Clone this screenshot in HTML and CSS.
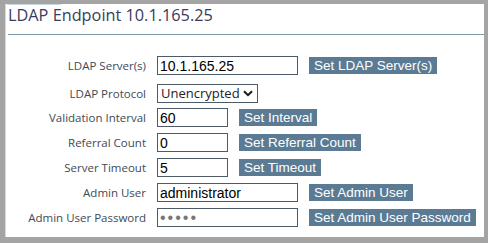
FILE: index.html
```html
<!DOCTYPE html>
<html>
<head>
<meta charset="utf-8">
<link rel="stylesheet" href="styles.css">
</head>
<body>
<div class="frame">
  <div class="panel">
    <h1 class="title">LDAP Endpoint 10.1.165.25</h1>
    <div class="form">
      <div class="row">
        <label class="lbl">LDAP Server(s)</label>
        <input class="inp wide" type="text" value="10.1.165.25">
        <button class="btn">Set LDAP Server(s)</button>
      </div>
      <div class="row row-select">
        <label class="lbl">LDAP Protocol</label>
        <span class="selwrap">
          <select class="sel"><option>Unencrypted</option></select>
          <svg class="chev" width="10" height="7" viewBox="0 0 10 7"><path d="M1 1.2 L5 5.2 L9 1.2" fill="none" stroke="#1a1a1a" stroke-width="2"/></svg>
        </span>
      </div>
      <div class="row">
        <label class="lbl">Validation Interval</label>
        <input class="inp narrow" type="text" value="60">
        <button class="btn">Set Interval</button>
      </div>
      <div class="row">
        <label class="lbl">Referral Count</label>
        <input class="inp narrow" type="text" value="0">
        <button class="btn">Set Referral Count</button>
      </div>
      <div class="row">
        <label class="lbl">Server Timeout</label>
        <input class="inp narrow" type="text" value="5">
        <button class="btn">Set Timeout</button>
      </div>
      <div class="row">
        <label class="lbl">Admin User</label>
        <input class="inp wide" type="text" value="administrator">
        <button class="btn">Set Admin User</button>
      </div>
      <div class="row">
        <label class="lbl">Admin User Password</label>
        <input class="inp wide pw" type="password" value="12345">
        <button class="btn">Set Admin User Password</button>
      </div>
    </div>
  </div>
</div>
</body>
</html>
```
FILE: styles.css
```css
html, body {
  margin: 0;
  padding: 0;
}
body {
  width: 488px;
  height: 243px;
  background: #a4a4a4;
  overflow: hidden;
}
.frame {
  box-sizing: border-box;
  height: 243px;
  padding: 4px 4px 6px 5px;
}
.panel {
  box-sizing: border-box;
  height: 100%;
  background: #ffffff;
  border-left: 1px solid #d9d9d9;
}
.panel::before {
  content: "";
  display: block;
  width: 54px;
  height: 1px;
  margin-left: 1px;
  background: #cbd9e6;
}
.title {
  margin: 0 0 0 2px;
  padding: 0 0 9px 0;
  font-family: "Open Sans", "Noto Sans", sans-serif;
  font-weight: normal;
  font-size: 16.3px;
  line-height: 20px;
  color: #393c5b;
  border-bottom: 1px solid #7f9aab;
}
.form {
  display: flex;
  flex-direction: column;
  gap: 6px;
  margin-top: 21px;
}
.row {
  display: flex;
  align-items: center;
  gap: 11px;
  height: 19px;
}
.row-select {
  margin-top: 3px;
  margin-bottom: -1px;
}
.lbl {
  width: 140px;
  text-align: right;
  font-family: "Open Sans", "Noto Sans", sans-serif;
  font-size: 11.5px;
  color: #414a56;
}
.inp {
  box-sizing: border-box;
  height: 19px;
  margin: 0;
  padding: 0 2px;
  border: 1px solid #4d5a68;
  border-radius: 0;
  font-family: "Liberation Sans", Arial, sans-serif;
  font-size: 14px;
  color: #000;
  outline: none;
}
.wide { width: 141px; }
.narrow { width: 71px; }
.pw {
  color: #767676;
  font-size: 16px;
  letter-spacing: 2px;
}
.selwrap {
  position: relative;
  display: inline-block;
  height: 19px;
}
.sel {
  appearance: none;
  -webkit-appearance: none;
  box-sizing: border-box;
  width: 101px;
  height: 19px;
  margin: 0;
  padding: 0 0 0 3px;
  border: 1px solid #4d5a68;
  border-radius: 0;
  background: #fff;
  font-family: "Open Sans", "Noto Sans", sans-serif;
  font-size: 13px;
  color: #222;
  line-height: 17px;
}
.chev {
  position: absolute;
  right: 5px;
  top: 6px;
  pointer-events: none;
}
.btn {
  height: 17px;
  margin: 0;
  padding: 0 5px;
  border: none;
  border-radius: 0;
  background: #5b7b94;
  color: #ffffff;
  font-family: "Liberation Sans", Arial, sans-serif;
  font-size: 13.5px;
  line-height: 17px;
  white-space: nowrap;
}
```
